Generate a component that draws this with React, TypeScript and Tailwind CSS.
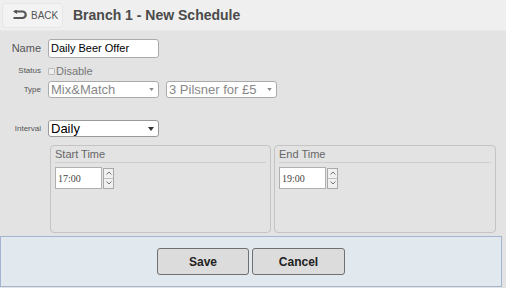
import React from "react";

const Spinner = () => (
  <div className="flex flex-col w-[11px] h-[21px] border border-[#a9a9a9] bg-[#f0f0f0] ml-[1px]">
    <div className="flex-1 flex items-center justify-center border-b border-[#c0c0c0]">
      <svg width="6" height="4" viewBox="0 0 6 4"><path d="M0.5 3.5 L3 1 L5.5 3.5" stroke="#666" fill="none" strokeWidth="0.9" /></svg>
    </div>
    <div className="flex-1 flex items-center justify-center">
      <svg width="6" height="4" viewBox="0 0 6 4"><path d="M0.5 0.5 L3 3 L5.5 0.5" stroke="#666" fill="none" strokeWidth="0.9" /></svg>
    </div>
  </div>
);

const Caret = () => (
  <svg width="6" height="4" viewBox="0 0 6 4"><path d="M0 0 H6 L3 4 Z" fill="#333" /></svg>
);
const CaretGrey = () => (
  <svg width="5" height="3" viewBox="0 0 6 4"><path d="M0 0 H6 L3 4 Z" fill="#888" /></svg>
);

function Fieldset({ title, time }: { title: string; time: string }) {
  return (
    <div className="h-[88px] border border-[#c4c4c4] rounded-[4px] px-[4px]">
      <div className="text-[11px] text-[#666] leading-[14px] pt-[1px]">{title}</div>
      <div className="border-t border-[#cfcfcf] mt-[1px]" />
      <div className="flex items-start mt-[4px]">
        <div className="flex items-center">
          <div className="w-[47px] h-[22px] bg-white border border-[#b0b0b0] flex items-center pl-[2px] text-[10px] text-[#444]" style={{ fontFamily: "'Liberation Serif', serif" }}>{time}</div>
          <Spinner />
        </div>
      </div>
    </div>
  );
}

export default function App() {
  return (
    <div className="w-[506px] h-[288px] bg-[#e3e3e3] overflow-hidden" style={{ fontFamily: "'Liberation Sans', Arial, sans-serif" }}>
      <div className="h-[31px] bg-[#efefef] flex items-center pl-[2px] border-b border-[#e8e8e8]">
        <div className="w-[61px] h-[25px] bg-[#f3f3f3] border border-[#e6e6e6] rounded-[4px] flex items-center pl-[9px] gap-[4px]">
          <svg width="15" height="10" viewBox="0 0 15 10">
            <path d="M5 1.5 H10.5 A3.2 3.2 0 0 1 10.5 8 H1.5" stroke="#555" strokeWidth="2.2" fill="none" />
            <path d="M1 1.5 L5 -1 V4 Z" fill="#555" />
          </svg>
          <span className="text-[10px] text-[#555]">BACK</span>
        </div>
        <div className="ml-[10px] text-[14px] font-bold text-[#4a4a4a]">Branch 1 - New Schedule</div>
      </div>

      <div className="flex items-center mt-[8px]">
        <div className="w-[41px] text-right text-[11px] text-[#555]">Name</div>
        <div className="ml-[7px] w-[111px] h-[19px] bg-white border border-[#aaa] rounded-[3px] flex items-center pl-[2px] text-[11px] text-black">Daily Beer Offer</div>
      </div>

      <div className="flex items-center mt-[6px] h-[14px]">
        <div className="w-[41px] text-right text-[8px] text-[#555]">Status</div>
        <div className="ml-[7px] w-[7px] h-[7px] border border-[#bbb] rounded-[1px] bg-[#eee]" />
        <div className="text-[11px] text-[#777] ml-[1px]">Disable</div>
      </div>

      <div className="flex items-center mt-[3px]">
        <div className="w-[41px] text-right text-[8px] text-[#555]">Type</div>
        <div className="ml-[7px] w-[111px] h-[17px] bg-white border border-[#aaa] rounded-[3px] flex items-center justify-between pl-[2px] pr-[4px] text-[13px] text-[#888]">
          <span>Mix&amp;Match</span><CaretGrey />
        </div>
        <div className="ml-[7px] w-[111px] h-[17px] bg-white border border-[#aaa] rounded-[3px] flex items-center justify-between pl-[2px] pr-[4px] text-[13px] text-[#888]">
          <span>3 Pilsner for £5</span><CaretGrey />
        </div>
      </div>

      <div className="flex items-center mt-[22px]">
        <div className="w-[41px] text-right text-[8px] text-[#555]">Interval</div>
        <div className="ml-[7px] w-[111px] h-[17px] bg-white border border-[#999] rounded-[3px] flex items-center justify-between pl-[2px] pr-[4px] text-[13px] text-black">
          <span>Daily</span><Caret />
        </div>
      </div>

      <div className="flex ml-[50px] mt-[8px] w-[446px] gap-[3px]">
        <div className="w-[221px]"><Fieldset title="Start Time" time="17:00" /></div>
        <div className="w-[222px]"><Fieldset title="End Time" time="19:00" /></div>
      </div>

      <div className="mt-[3px] w-[502px] h-[51px] bg-[#e1e8ee] border border-[#a3b5d1] flex items-center justify-center gap-[3px]">
        <button className="w-[92px] h-[27px] bg-[#dcdcdc] border border-[#707070] rounded-[3px] text-[12px] font-bold text-[#222]">Save</button>
        <button className="w-[93px] h-[27px] bg-[#dcdcdc] border border-[#707070] rounded-[3px] text-[12px] font-bold text-[#222]">Cancel</button>
      </div>
    </div>
  );
}
